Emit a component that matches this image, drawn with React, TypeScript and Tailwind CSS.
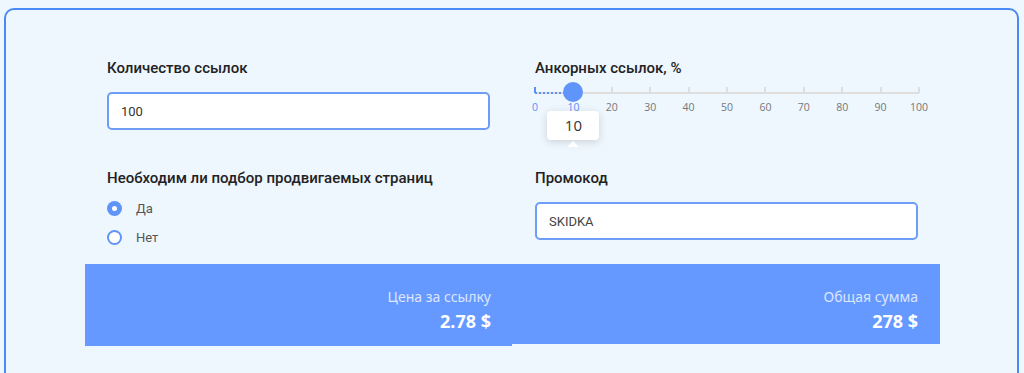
import { useState } from 'react';

const TICKS = [0, 10, 20, 30, 40, 50, 60, 70, 80, 90, 100];

function AnchorSlider({ value }: { value: number }) {
  // track is 384px wide, one tick every 38.4px
  const pos = (value / 100) * 384;

  return (
    <div className="relative h-[90px] w-[384px]">
      {/* track */}
      <div className="absolute left-0 right-0 top-[14px] h-[2px] bg-[#dedede]" />
      <div
        className="absolute left-0 top-[13px] h-[3px] border-b-2 border-dotted border-[#5b8ff9]"
        style={{ width: pos }}
      />
      {TICKS.map((t) => (
        <div
          key={t}
          className={`absolute top-[9px] h-[6px] w-[2px] -translate-x-1/2 ${
            t <= value ? 'bg-[#5b8ff9]' : 'bg-[#dedede]'
          }`}
          style={{ left: (t / 100) * 384 }}
        />
      ))}
      {TICKS.map((t) => (
        <span
          key={`l${t}`}
          className={`absolute top-[23px] -translate-x-1/2 font-['Open_Sans',sans-serif] text-[10.5px] leading-[12px] ${
            t <= value ? 'text-[#5b8ff9]' : 'text-[#777]'
          }`}
          style={{ left: (t / 100) * 384 }}
        >
          {t}
        </span>
      ))}

      {/* thumb */}
      <div
        className="absolute top-[4px] h-5 w-5 -translate-x-1/2 rounded-full bg-[#5f95fa]"
        style={{ left: pos }}
      />

      {/* value tooltip */}
      <div
        className="absolute top-[33px] flex h-[29px] w-[52px] -translate-x-1/2 items-center justify-center rounded-[4px] bg-white font-['Open_Sans',sans-serif] text-[15px] text-[#333] shadow-[0_2px_8px_rgba(0,0,0,0.15)]"
        style={{ left: pos }}
      >
        {value}
      </div>
      <div
        className="absolute top-[63px] h-0 w-0 -translate-x-1/2 border-x-[6px] border-b-[6px] border-x-transparent border-b-white"
        style={{ left: pos }}
      />
    </div>
  );
}

function Radio({ checked, label, onClick }: { checked: boolean; label: string; onClick: () => void }) {
  return (
    <button type="button" onClick={onClick} className="flex h-[29px] items-center gap-[14px]">
      {checked ? (
        <span className="flex h-[15px] w-[15px] items-center justify-center rounded-full bg-[#5f95fa]">
          <span className="h-[5px] w-[5px] rounded-full bg-white" />
        </span>
      ) : (
        <span className="h-[15px] w-[15px] rounded-full border-2 border-[#5f95fa] bg-white" />
      )}
      <span className="text-[13px] text-[#555]">{label}</span>
    </button>
  );
}

export default function App() {
  const [count, setCount] = useState('100');
  const [promo, setPromo] = useState('SKIDKA');
  const [needPages, setNeedPages] = useState(true);

  return (
    <div className="h-[373px] overflow-hidden bg-[#eef6fe] pl-[4px] pr-[5px] pt-[8px] font-['Roboto',sans-serif]">
      <div className="h-[420px] rounded-[10px] border-2 border-[#4a8af4] bg-[#eef6fe] pt-[48px]">
        <div className="ml-[79px] w-[855px]">
          <div className="grid grid-cols-2 gap-x-[45px] px-[22px]">
            {/* Row 1 */}
            <div className="h-[110px]">
              <h3 className="text-[15px] font-medium leading-5 text-[#222]">Количество ссылок</h3>
              <input
                value={count}
                onChange={(e) => setCount(e.target.value)}
                className="mt-[14px] h-[38px] w-full rounded-[5px] border-2 border-[#6d9df7] bg-white px-3 text-[13px] text-[#333] outline-none"
              />
            </div>
            <div className="h-[110px]">
              <h3 className="text-[15px] font-medium leading-5 text-[#222]">Анкорных ссылок, %</h3>
              <AnchorSlider value={10} />
            </div>

            {/* Row 2 */}
            <div className="h-[96px]">
              <h3 className="text-[15px] font-medium leading-5 text-[#222]">
                Необходим ли подбор продвигаемых страниц
              </h3>
              <div className="mt-[6px] flex flex-col">
                <Radio checked={needPages} label="Да" onClick={() => setNeedPages(true)} />
                <Radio checked={!needPages} label="Нет" onClick={() => setNeedPages(false)} />
              </div>
            </div>
            <div className="h-[96px]">
              <h3 className="text-[15px] font-medium leading-5 text-[#222]">Промокод</h3>
              <input
                value={promo}
                onChange={(e) => setPromo(e.target.value)}
                className="mt-[14px] h-[38px] w-full rounded-[5px] border-2 border-[#6d9df7] bg-white px-3 text-[13px] text-[#444] outline-none"
              />
            </div>
          </div>

          {/* Totals */}
          <div className="grid grid-cols-[427px_428px] items-start font-['Noto_Sans',sans-serif]">
            <div className="flex h-[82px] flex-col items-end bg-[#6699ff] pr-[21px] pt-[24px]">
              <span className="text-[14px] leading-[18px] text-[#dbe6ff]">Цена за ссылку</span>
              <span className="mt-[3px] text-[18px] font-bold leading-6 text-white">2.78 $</span>
            </div>
            <div className="flex h-[80px] flex-col items-end bg-[#6699ff] pr-[22px] pt-[24px]">
              <span className="text-[14px] leading-[18px] text-[#dbe6ff]">Общая сумма</span>
              <span className="mt-[3px] text-[18px] font-bold leading-6 text-white">278 $</span>
            </div>
          </div>
        </div>
      </div>
    </div>
  );
}
